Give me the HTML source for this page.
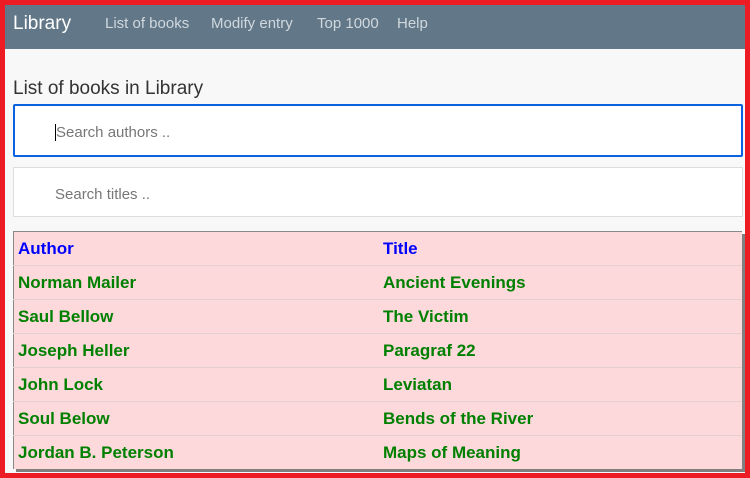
<!DOCTYPE html>
<html><head><style>
html,body{margin:0;padding:0}
body{width:750px;height:478px;background:#ed1c24;position:relative;overflow:hidden;font-family:"Liberation Sans",sans-serif}
.in{position:absolute;left:5px;top:5px;width:740px;height:468px;background:#f8f8f8;overflow:hidden}
.nav{height:44px;background:#627888;position:relative}
.nav span{position:absolute;top:10px;color:#d0d8de;font-size:15px}
.brand{left:8px!important;top:8px!important;color:#fff!important;font-size:19px!important}
h1{position:absolute;left:8px;top:73px;margin:0;font-size:19px;font-weight:normal;color:#333}
.inp{position:absolute;left:8px;width:730px;background:#fff;box-sizing:border-box;border:1px solid #ddd;color:#777;font-size:15px}
.inp div{position:absolute;left:41px}
table{position:absolute;left:8px;top:226px;width:729px;border-collapse:collapse;background:#fdd9db;border-top:1px solid #888;border-left:1px solid #888;box-shadow:3px 3px 0 #808080}
td{height:33px;border-bottom:1px solid #e4d0d0;padding:0 4px;font-weight:bold;font-size:17px;color:#008000}
tr:last-child td{border-bottom:none}
th{height:33px;text-align:left;padding:0 4px;color:#0000ff;font-size:17px;border-bottom:1px solid #e4d0d0}
</style></head><body><div class="in">
<div class="nav"><span class="brand">Library</span><span style="left:100px">List of books</span><span style="left:206px">Modify entry</span><span style="left:312px">Top 1000</span><span style="left:392px">Help</span></div>
<h1>List of books in Library</h1>
<div class="inp" style="top:99px;height:53px;border:2px solid #0b62e0;border-radius:2px"><div style="top:18px;left:40px;border-left:1px solid #000;padding-left:0">Search authors ..</div></div>
<div class="inp" style="top:162px;height:50px"><div style="top:18px">Search titles ..</div></div>
<table>
<tr><th style="width:357px">Author</th><th>Title</th></tr>
<tr><td>Norman Mailer</td><td>Ancient Evenings</td></tr>
<tr><td>Saul Bellow</td><td>The Victim</td></tr>
<tr><td>Joseph Heller</td><td>Paragraf 22</td></tr>
<tr><td>John Lock</td><td>Leviatan</td></tr>
<tr><td>Soul Below</td><td>Bends of the River</td></tr>
<tr><td>Jordan B. Peterson</td><td>Maps of Meaning</td></tr>
</table>
</div></body></html>
